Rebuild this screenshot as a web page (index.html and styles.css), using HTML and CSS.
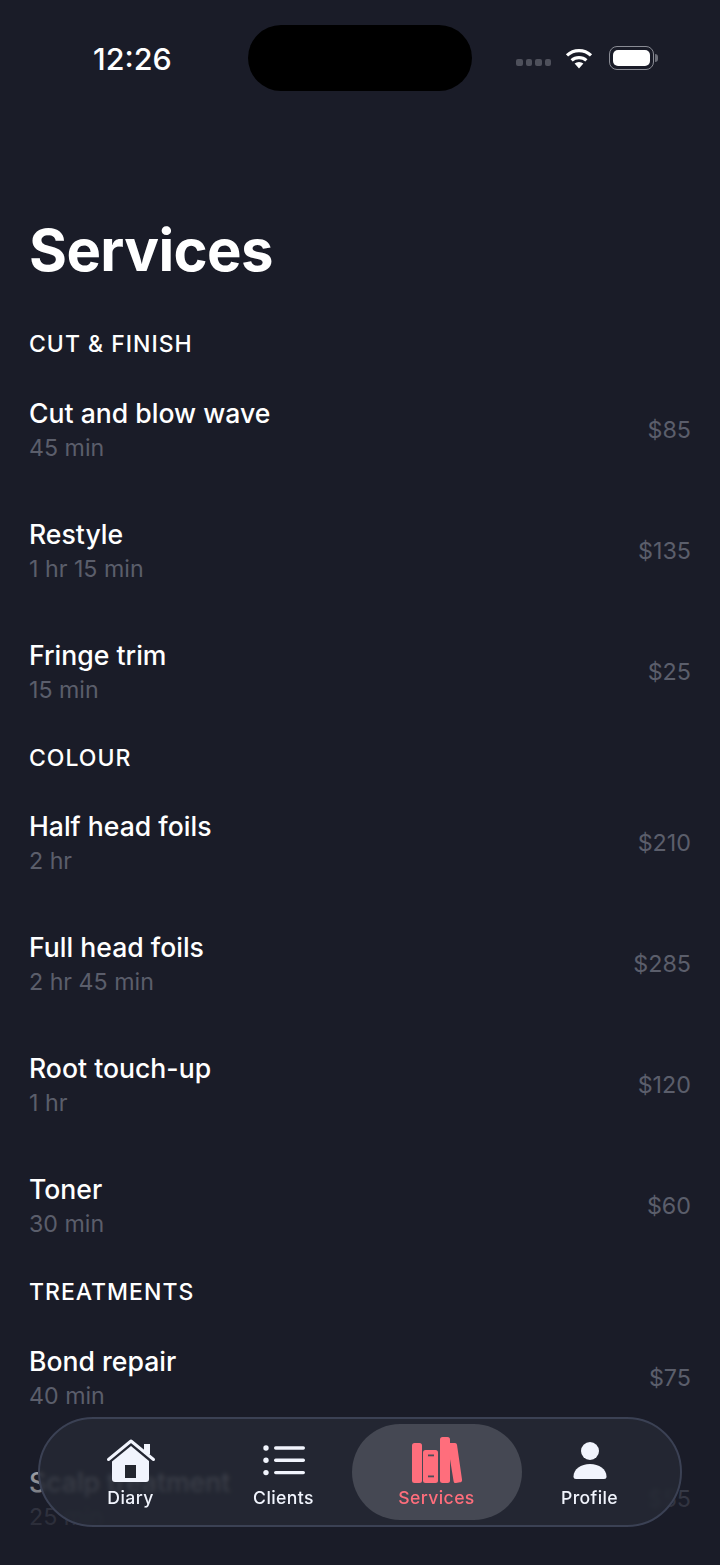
FILE: index.html
```html
<!doctype html>
<html lang="en">
    <head>
        <meta charset="UTF-8" />
        <meta name="viewport" content="width=device-width, initial-scale=1.0" />
        <title>Services</title>
        <link rel="stylesheet" href="styles.css">
    </head>
    <body>
        <div class="status-bar">
            <span class="clock">12:26</span>
            <div class="island"></div>
            <div class="status-icons">
                <div class="signal"><i></i><i></i><i></i><i></i></div>
                <svg class="wifi" width="30" height="22" viewBox="0 0 30 22">
                    <path d="M15 21.5 10.6 16.6a6.6 6.6 0 0 1 8.8 0Z" fill="#fff"/>
                    <path d="M7.6 13.4a11 11 0 0 1 14.8 0" fill="none" stroke="#fff" stroke-width="3.2"/>
                    <path d="M3 8.4a17.6 17.6 0 0 1 24 0" fill="none" stroke="#fff" stroke-width="3.2"/>
                </svg>
                <div class="battery"><div class="battery-fill"></div></div>
                <div class="battery-cap"></div>
            </div>
        </div>

        <main class="page">
            <h1>Services</h1>

            <h2 class="section-label">CUT &amp; FINISH</h2>
            <div class="service"><div><div class="name">Cut and blow wave</div><div class="time">45 min</div></div><div class="price">$85</div></div>
            <div class="service"><div><div class="name">Restyle</div><div class="time">1 hr 15 min</div></div><div class="price">$135</div></div>
            <div class="service"><div><div class="name">Fringe trim</div><div class="time">15 min</div></div><div class="price">$25</div></div>

            <h2 class="section-label">COLOUR</h2>
            <div class="service"><div><div class="name">Half head foils</div><div class="time">2 hr</div></div><div class="price">$210</div></div>
            <div class="service"><div><div class="name">Full head foils</div><div class="time">2 hr 45 min</div></div><div class="price">$285</div></div>
            <div class="service"><div><div class="name">Root touch-up</div><div class="time">1 hr</div></div><div class="price">$120</div></div>
            <div class="service"><div><div class="name">Toner</div><div class="time">30 min</div></div><div class="price">$60</div></div>

            <h2 class="section-label">TREATMENTS</h2>
            <div class="service"><div><div class="name">Bond repair</div><div class="time">40 min</div></div><div class="price">$75</div></div>
            <div class="service"><div><div class="name">Scalp treatment</div><div class="time">25 min</div></div><div class="price">$55</div></div>
        </main>

        <div class="bottom-fade"></div>

        <nav class="tab-bar">
            <a class="tab">
                <svg width="50" height="44" viewBox="0 0 50 44">
                    <path d="M6 22.500 25 7l18 15v18a3 3 0 0 1-3 3H9a3 3 0 0 1-3-3Z" fill="#f1f4fd"/>
                    <rect x="19" y="26" width="11" height="13" fill="#23262f"/>
                    <path d="M2.500 20.500 25 2l22.500 18.500" fill="none" stroke="#f1f4fd" stroke-width="3" stroke-linecap="round" stroke-linejoin="round"/>
                    <rect x="38" y="5" width="6" height="10" fill="#f1f4fd"/>
                </svg>
                <span>Diary</span>
            </a>
            <a class="tab">
                <svg width="44" height="44" viewBox="0 0 44 44">
                    <circle cx="4" cy="9" r="2.700" fill="#f1f4fd"/>
                    <circle cx="4" cy="21.300" r="2.700" fill="#f1f4fd"/>
                    <circle cx="4" cy="33.600" r="2.700" fill="#f1f4fd"/>
                    <rect x="12" y="7.300" width="31" height="3.400" rx="1.700" fill="#f1f4fd"/>
                    <rect x="12" y="19.600" width="31" height="3.400" rx="1.700" fill="#f1f4fd"/>
                    <rect x="12" y="31.900" width="31" height="3.400" rx="1.700" fill="#f1f4fd"/>
                </svg>
                <span>Clients</span>
            </a>
            <a class="tab tab-active">
                <svg width="50" height="44" viewBox="0 0 50 44">
                    <rect x="0" y="4" width="10" height="40" rx="2.500" fill="#ff6e7c"/>
                    <rect x="11" y="11" width="15" height="33" rx="2.500" fill="#ff6e7c"/>
                    <rect x="16" y="15.500" width="6" height="1.800" fill="#4a4d58"/>
                    <rect x="16" y="36.500" width="6" height="1.800" fill="#4a4d58"/>
                    <rect x="28" y="-2" width="10" height="46" rx="2.500" fill="#ff6e7c"/>
                    <path d="M37 4h6a2 2 0 0 1 2 1.700l5 34.800a2.200 2.200 0 0 1-2 2.800l-4 .7a2 2 0 0 1-2.400-1.800L37 14Z" fill="#ff6e7c"/>
                </svg>
                <span>Services</span>
            </a>
            <a class="tab">
                <svg width="36" height="44" viewBox="0 0 36 44">
                    <circle cx="18" cy="12" r="9" fill="#f1f4fd"/>
                    <path d="M1.500 37.500C1.500 30 9 25 18 25s16.500 5 16.500 12.500A2.500 2.500 0 0 1 32 40H4a2.500 2.500 0 0 1-2.500-2.500Z" fill="#f1f4fd"/>
                </svg>
                <span>Profile</span>
            </a>
        </nav>
    </body>
</html>
```

FILE: styles.css
```css
* {
    box-sizing: border-box;
}
html,
body {
    height: 100%;
}
body {
    position: relative;
    margin: 0;
    overflow: hidden;
    background-color: #1a1c28;
    color: #ffffff;
    font-family: "Inter", "Liberation Sans", sans-serif;
}
.status-bar {
    display: flex;
    align-items: center;
    height: 116px;
    padding: 0 0 0 93px;
}
.clock {
    flex-shrink: 0;
    width: 155px;
    font-size: 30.5px;
    font-weight: 500;
}
.island {
    flex-shrink: 0;
    width: 224px;
    height: 66px;
    border-radius: 33px;
    background-color: #000000;
}
.status-icons {
    display: flex;
    align-items: center;
    flex-shrink: 0;
    margin-left: 44px;
}
.signal {
    display: flex;
    gap: 3px;
    margin: 8px 13px 0 0;
}
.signal i {
    width: 6.5px;
    height: 7px;
    border-radius: 2px;
    background-color: #4e505b;
}
.wifi {
    margin-right: 15px;
}
.battery {
    width: 45px;
    height: 24px;
    padding: 3px;
    border: 1.5px solid #8a8c95;
    border-radius: 8px;
}
.battery-fill {
    height: 100%;
    border-radius: 5px;
    background-color: #ffffff;
}
.battery-cap {
    width: 3px;
    height: 8px;
    margin-left: 1px;
    border-radius: 0 3px 3px 0;
    background-color: #6c6e78;
}
.page {
    padding: 0 29px;
}
h1 {
    margin: 0 0 42px;
    padding-top: 96px;
    font-size: 58px;
    line-height: 76px;
    font-weight: 700;
    letter-spacing: -0.6px;
}
.section-label {
    margin: 11px 0 11.5px;
    font-size: 23px;
    line-height: 28px;
    font-weight: 500;
    letter-spacing: 1px;
}
.service {
    display: flex;
    align-items: center;
    justify-content: space-between;
    height: 121px;
}
.name {
    font-size: 26.6px;
    line-height: 35px;
    font-weight: 500;
}
.time {
    font-size: 23.2px;
    line-height: 34px;
    color: #5b5e6b;
}
.price {
    padding-bottom: 2px;
    font-size: 23.3px;
    color: #5b5e6b;
}
.bottom-fade {
    position: absolute;
    left: 0;
    right: 0;
    bottom: 0;
    height: 155px;
    background: linear-gradient(rgba(26, 28, 40, 0), rgba(26, 28, 40, 0.62) 58%, rgba(26, 28, 40, 0.92));
}
.tab-bar {
    position: absolute;
    left: 38px;
    bottom: 38px;
    display: grid;
    grid-template-columns: repeat(4, 153px);
    width: 644px;
    height: 110px;
    padding: 5px 14px;
    border: 2px solid #3b4154;
    border-radius: 55px;
    background-color: rgba(38, 41, 52, 0.8);
    backdrop-filter: blur(2px);
}
.tab {
    display: flex;
    flex-direction: column;
    align-items: center;
    justify-content: flex-end;
    gap: 4px;
    padding-bottom: 11px;
    border-radius: 48px;
    font-size: 17.6px;
    line-height: 22px;
    font-weight: 500;
    letter-spacing: 0.4px;
    color: #f1f4fd;
}
.tab svg {
    display: block;
    overflow: visible;
}
.tab-active {
    margin: 0 -8.5px;
    background-color: #454853;
    color: #ff6e7c;
}
```
